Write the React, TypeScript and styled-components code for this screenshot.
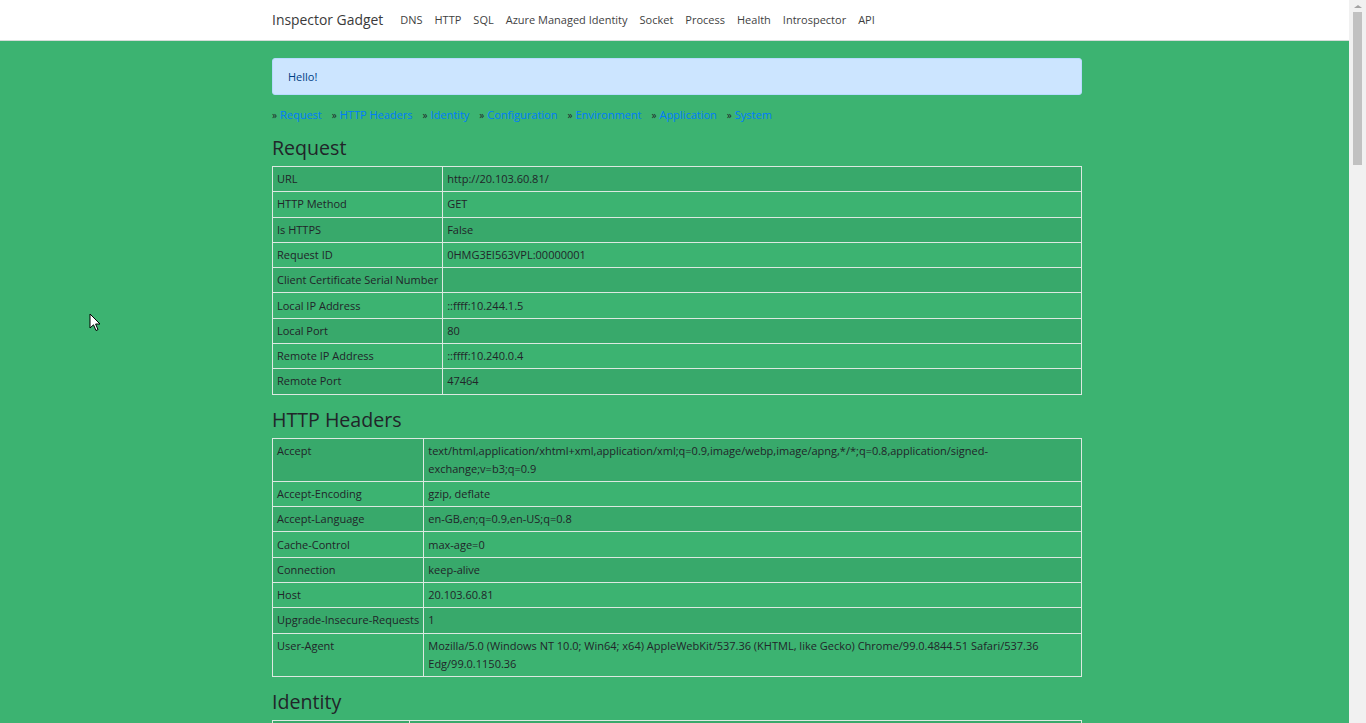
import React from 'react';
import styled, { createGlobalStyle } from 'styled-components';

const GlobalStyle = createGlobalStyle`
  html, body {
    margin: 0;
    padding: 0;
  }
  body {
    background: #3cb371;
    color: #212529;
    font-family: "Open Sans", "Noto Sans", "Liberation Sans", sans-serif;
    font-size: 11px;
    padding-right: 17px;
  }
  * {
    box-sizing: border-box;
  }
`;

type Row = [string, string];

const navItems = ['DNS', 'HTTP', 'SQL', 'Azure Managed Identity', 'Socket', 'Process', 'Health', 'Introspector', 'API'];

const sections = ['Request', 'HTTP Headers', 'Identity', 'Configuration', 'Environment', 'Application', 'System'];

const requestRows: Row[] = [
  ['URL', 'http://20.103.60.81/'],
  ['HTTP Method', 'GET'],
  ['Is HTTPS', 'False'],
  ['Request ID', '0HMG3EI563VPL:00000001'],
  ['Client Certificate Serial Number', ''],
  ['Local IP Address', '::ffff:10.244.1.5'],
  ['Local Port', '80'],
  ['Remote IP Address', '::ffff:10.240.0.4'],
  ['Remote Port', '47464'],
];

const headerRows: Row[] = [
  ['Accept', 'text/html,application/xhtml+xml,application/xml;q=0.9,image/webp,image/apng,*/*;q=0.8,application/signed-exchange;v=b3;q=0.9'],
  ['Accept-Encoding', 'gzip, deflate'],
  ['Accept-Language', 'en-GB,en;q=0.9,en-US;q=0.8'],
  ['Cache-Control', 'max-age=0'],
  ['Connection', 'keep-alive'],
  ['Host', '20.103.60.81'],
  ['Upgrade-Insecure-Requests', '1'],
  ['User-Agent', 'Mozilla/5.0 (Windows NT 10.0; Win64; x64) AppleWebKit/537.36 (KHTML, like Gecko) Chrome/99.0.4844.51 Safari/537.36 Edg/99.0.1150.36'],
];

const identityRows: Row[] = [
  ['Authentication Type', ''],
  ['Is Authenticated', 'False'],
  ['Name', ''],
  ['Claims', ''],
];

const configRows: Row[] = [
  ['DefaultCallChainUrls', ''],
  ['DnsLookupEnabled', 'True'],
  ['HttpRequestEnabled', 'True'],
  ['SqlConnectionEnabled', 'True'],
  ['SocketConnectionEnabled', 'True'],
  ['ProcessRunEnabled', 'True'],
  ['IntrospectorEnabled', 'True'],
];

const environmentRows: Row[] = [
  ['ASPNETCORE_URLS', 'http://+:80'],
  ['DOTNET_RUNNING_IN_CONTAINER', 'true'],
  ['HOSTNAME', 'inspectorgadget-5d8f7c9b6-x2kqp'],
  ['HOME', '/root'],
  ['PATH', '/usr/local/sbin:/usr/local/bin:/usr/sbin:/usr/bin:/sbin:/bin'],
];

const applicationRows: Row[] = [
  ['Application Name', 'InspectorGadget'],
  ['Version', '1.0.0.0'],
  ['Content Root Path', '/app'],
  ['Environment', 'Production'],
];

const systemRows: Row[] = [
  ['Machine Name', 'inspectorgadget-5d8f7c9b6-x2kqp'],
  ['OS Description', 'Linux 5.4.0-1068-azure #71~18.04.1-Ubuntu SMP'],
  ['Processor Count', '2'],
  ['Framework', '.NET 6.0.3'],
];

const Navbar = styled.nav`
  background: #ffffff;
  border-bottom: 1px solid #d6dcd8;
  height: 41px;
`;

const Container = styled.div`
  width: 810px;
  margin: 0 auto;
  position: relative;
  left: 2.5px;
`;

const NavInner = styled(Container)`
  display: flex;
  align-items: center;
  height: 100%;
`;

const Brand = styled.a`
  font-size: 13.9px;
  color: #3a3a3a;
  margin-right: 17px;
  text-decoration: none;
  line-height: 20px;
`;

const NavLinks = styled.ul`
  display: flex;
  list-style: none;
  margin: 0;
  padding: 0;
  gap: 12px;
`;

const NavLink = styled.a`
  color: #3f3f3f;
  font-size: 11px;
  text-decoration: none;
  line-height: 18px;
`;

const Main = styled(Container)`
  padding-top: 17px;
  padding-bottom: 40px;
`;

const Alert = styled.div`
  background: #cce5ff;
  border: 1px solid #b8daff;
  border-radius: 3px;
  color: #004085;
  padding: 9px 15px 8px;
  line-height: 18px;
`;

const SectionNav = styled.div`
  display: flex;
  gap: 10px;
  margin-top: 11px;
  line-height: 18px;
`;

const SectionItem = styled.span`
  display: inline-flex;
  align-items: baseline;
  gap: 3px;
  &::before {
    content: '»';
    color: #212529;
    font-size: 10px;
  }
`;

const SectionLink = styled.a`
  color: #007bff;
  text-decoration: none;
`;

const Heading = styled.h2`
  font-size: 19.6px;
  font-weight: 500;
  line-height: 24px;
  margin: 12px 0 6px;
  color: #212529;
`;

const Table = styled.table<{ $keyWidth: number }>`
  width: 100%;
  border-collapse: collapse;
  border: 1px solid #dce9e1;
  margin-bottom: 13px;

  td {
    border: 1px solid #dce9e1;
    padding: 3.2px 4px 3.1px 4px;
    line-height: 18px;
    vertical-align: top;
  }

  td:first-child {
    width: ${(p) => p.$keyWidth}px;
    white-space: nowrap;
  }

  tr:nth-child(odd) td {
    background: rgba(0, 0, 0, 0.05);
  }
`;

/* stand-in for the browser's classic scrollbar seen in the screenshot */
const ScrollTrack = styled.div`
  position: fixed;
  top: 0;
  right: 0;
  bottom: 0;
  width: 17px;
  background: #f1f1f1;
  display: flex;
  flex-direction: column;
  align-items: center;
`;

const ScrollArrow = styled.div`
  margin-top: 5px;
  width: 0;
  height: 0;
  border-left: 4px solid transparent;
  border-right: 4px solid transparent;
  border-bottom: 3px solid #a3a3a3;
`;

const ScrollThumb = styled.div`
  margin-top: 4px;
  width: 9px;
  height: 153px;
  background: #c1c1c1;
`;

const Cursor = styled.svg`
  position: fixed;
  left: 89px;
  top: 313px;
  pointer-events: none;
`;

const DataTable = ({ rows, keyWidth }: { rows: Row[]; keyWidth: number }) => (
  <Table $keyWidth={keyWidth}>
    <tbody>
      {rows.map(([k, v]) => (
        <tr key={k}>
          <td>{k}</td>
          <td>{v}</td>
        </tr>
      ))}
    </tbody>
  </Table>
);

const App = () => {
  return (
    <>
      <GlobalStyle />
      <Navbar>
        <NavInner>
          <Brand href="#">Inspector Gadget</Brand>
          <NavLinks>
            {navItems.map((item) => (
              <li key={item}>
                <NavLink href="#">{item}</NavLink>
              </li>
            ))}
          </NavLinks>
        </NavInner>
      </Navbar>
      <Main>
        <Alert>Hello!</Alert>
        <SectionNav>
          {sections.map((s) => (
            <SectionItem key={s}>
              <SectionLink href="#">{s}</SectionLink>
            </SectionItem>
          ))}
        </SectionNav>
        <Heading>Request</Heading>
        <DataTable rows={requestRows} keyWidth={170} />
        <Heading>HTTP Headers</Heading>
        <DataTable rows={headerRows} keyWidth={151} />
        <Heading>Identity</Heading>
        <DataTable rows={identityRows} keyWidth={137} />
        <Heading>Configuration</Heading>
        <DataTable rows={configRows} keyWidth={170} />
        <Heading>Environment</Heading>
        <DataTable rows={environmentRows} keyWidth={200} />
        <Heading>Application</Heading>
        <DataTable rows={applicationRows} keyWidth={137} />
        <Heading>System</Heading>
        <DataTable rows={systemRows} keyWidth={137} />
      </Main>
      <ScrollTrack>
        <ScrollArrow />
        <ScrollThumb />
      </ScrollTrack>
      <Cursor width="13" height="20" viewBox="0 0 13 20">
        <path d="M1 1 L1 15 L4.5 11.8 L7 17.5 L9 16.6 L6.6 11 L11 11 Z" fill="#fff" stroke="#000" strokeWidth="1" strokeLinejoin="round" />
      </Cursor>
    </>
  );
};

export default App;
